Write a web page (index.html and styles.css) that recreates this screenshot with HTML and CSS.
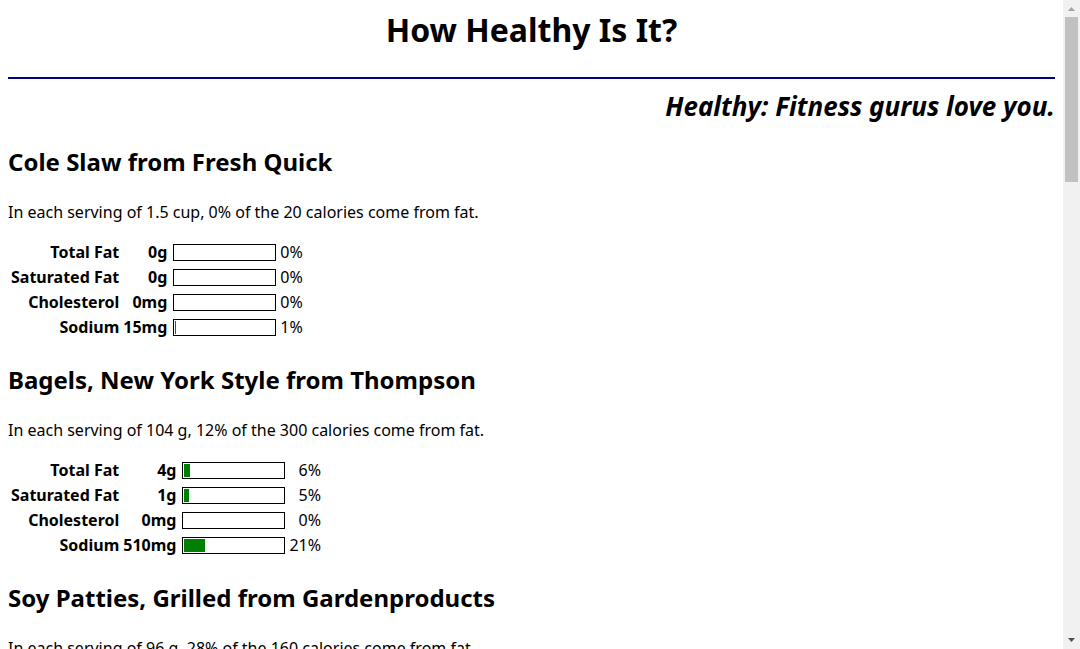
FILE: index.html
```html
<!DOCTYPE html>
<html lang="en">
<head>
<meta charset="utf-8">
<title>How Healthy Is It?</title>
<link rel="stylesheet" href="styles.css">
</head>
<body>
<div class="viewport">
<main class="page">
<h1 class="title">How Healthy Is It?</h1>
<p class="rating">Healthy: Fitness gurus love you.</p>
<section class="food">
<h2 class="name">Cole Slaw from Fresh Quick</h2>
<p class="serving">In each serving of 1.5 cup, 0% of the 20 calories come from fat.</p>
<table class="facts">
<tr><th scope="row">Total Fat</th><th>0g</th><td class="meter"><div class="bar"></div></td><td>0%</td></tr>
<tr><th scope="row">Saturated Fat</th><th>0g</th><td class="meter"><div class="bar"></div></td><td>0%</td></tr>
<tr><th scope="row">Cholesterol</th><th>0mg</th><td class="meter"><div class="bar"></div></td><td>0%</td></tr>
<tr><th scope="row">Sodium</th><th>15mg</th><td class="meter"><div class="bar"><div class="fill" style="width:1%"></div></div></td><td>1%</td></tr>
</table>
</section>
<section class="food">
<h2 class="name">Bagels, New York Style from Thompson</h2>
<p class="serving">In each serving of 104 g, 12% of the 300 calories come from fat.</p>
<table class="facts">
<tr><th scope="row">Total Fat</th><th>4g</th><td class="meter"><div class="bar"><div class="fill" style="width:6%"></div></div></td><td>6%</td></tr>
<tr><th scope="row">Saturated Fat</th><th>1g</th><td class="meter"><div class="bar"><div class="fill" style="width:5%"></div></div></td><td>5%</td></tr>
<tr><th scope="row">Cholesterol</th><th>0mg</th><td class="meter"><div class="bar"></div></td><td>0%</td></tr>
<tr><th scope="row">Sodium</th><th>510mg</th><td class="meter"><div class="bar"><div class="fill" style="width:21%"></div></div></td><td>21%</td></tr>
</table>
</section>
<section class="food">
<h2 class="name">Soy Patties, Grilled from Gardenproducts</h2>
<p class="serving">In each serving of 96 g, 28% of the 160 calories come from fat.</p>
</section>
</main>
<div class="scrollbar">
<svg class="arrow" viewBox="0 0 17 17"><path d="M5 11h7L8.500 7z" fill="#a3a3a3"/></svg>
<div class="track"><div class="thumb"></div></div>
<svg class="arrow" viewBox="0 0 17 17"><path d="M5 6h7L8.500 10z" fill="#505050"/></svg>
</div>
</div>
</body>
</html>
```
FILE: styles.css
```css
body {
  margin: 0;
  background: #fff;
  color: #000;
  font-family: "Segoe UI", "Noto Sans", sans-serif;
  font-size: 16px;
  line-height: 21px;
}
.viewport {
  display: flex;
  height: 100vh;
  overflow: hidden;
}
.page {
  flex: 1;
  padding: 8px;
}
.title {
  margin: 0;
  padding-bottom: 25px;
  border-bottom: 2px solid #000080;
  font-size: 32px;
  line-height: 44px;
  text-align: center;
}
.rating {
  margin: 10px 0 0;
  font-size: 26px;
  line-height: 34px;
  font-weight: bold;
  font-style: italic;
  text-align: right;
}
.name {
  margin: 21px 0 23px;
  font-size: 24px;
  line-height: 35px;
}
.serving {
  margin: 0 0 16px;
}
.facts {
  border-spacing: 2px;
}
.facts th,
.facts td {
  padding: 1px;
  text-align: right;
  white-space: nowrap;
}
.facts .meter {
  padding-left: 3px;
}
.bar {
  width: 100px;
  height: 13px;
  padding: 1px 0 1px 1px;
  border: 1px solid #000;
}
.fill {
  height: 100%;
  background: #008000;
}
.scrollbar {
  display: flex;
  flex-direction: column;
  width: 17px;
  background: #f1f1f1;
}
.arrow {
  display: block;
  width: 17px;
  height: 17px;
}
.track {
  flex: 1;
}
.thumb {
  height: 165px;
  margin: 0 2px;
  background: #c1c1c1;
}
```
